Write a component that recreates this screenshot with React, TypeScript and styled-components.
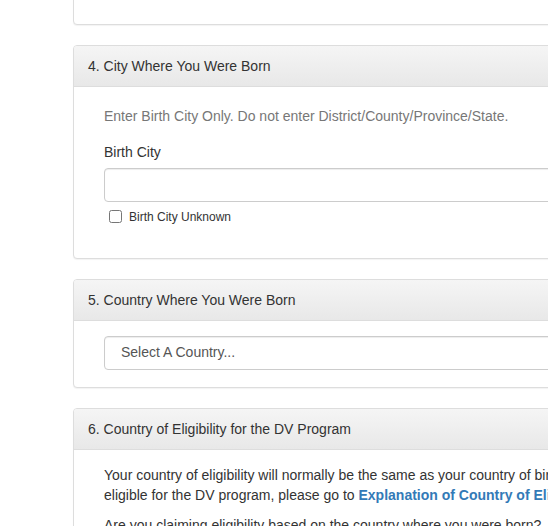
import styled, { createGlobalStyle } from 'styled-components'

const GlobalStyle = createGlobalStyle`
  html, body {
    margin: 0;
    padding: 0;
    background: #fff;
    overflow: hidden;
  }
  body {
    font-family: "Liberation Sans", Arial, Helvetica, sans-serif;
    font-size: 14px;
    line-height: 1.42857;
    color: #333;
  }
  * {
    box-sizing: border-box;
  }
`

const Page = styled.div`
  padding-left: 73px;
  width: 1300px;
  margin-top: -40px;
`

const Panel = styled.div`
  background: #fff;
  border: 1px solid #ddd;
  border-radius: 4px;
  box-shadow: 0 1px 1px rgba(0, 0, 0, 0.05);
  margin-bottom: 20px;
`

const PanelHeading = styled.div`
  padding: 10px 14px;
  border-bottom: 1px solid #ddd;
  border-radius: 3px 3px 0 0;
  background: linear-gradient(to bottom, #f5f5f5 0%, #e8e8e8 100%);
  color: #333;
  font-size: 14px;
  line-height: 20px;
`

const PanelBody = styled.div<{ $height?: number; $top?: number; $bottom?: number }>`
  padding: ${({ $top = 15, $bottom = 15 }) => `${$top}px 15px ${$bottom}px`};
  height: ${({ $height }) => ($height ? `${$height}px` : 'auto')};
`

const Section = styled.div`
  padding: 0 15px;
`

const Muted = styled.p`
  margin: 5px 0 16px;
  color: #777;
`

const Text = styled.p`
  margin: 0 0 10px;
  line-height: 20px;
  color: #333;
`

const Link = styled.a`
  color: #337ab7;
  font-weight: bold;
  text-decoration: none;
`

const FieldLabel = styled.label`
  display: block;
  margin-bottom: 5px;
  color: #333;
`

const TextInput = styled.input`
  display: block;
  width: 100%;
  height: 34px;
  padding: 6px 12px;
  font: inherit;
  color: #555;
  border: 1px solid #ccc;
  border-radius: 4px;
  box-shadow: inset 0 1px 1px rgba(0, 0, 0, 0.075);
  outline: none;
`

const CheckRow = styled.label`
  display: flex;
  align-items: center;
  gap: 7px;
  margin: 5px 0 16px 5px;
  font-size: 12px;
  line-height: 20px;
  color: #333;
`

const CheckBox = styled.input`
  margin: 0;
  width: 13px;
  height: 13px;
`

const SelectBox = styled.div`
  height: 34px;
  padding: 0 16px;
  display: flex;
  align-items: center;
  color: #555;
  border: 1px solid #ccc;
  border-radius: 4px;
  box-shadow: inset 0 1px 1px rgba(0, 0, 0, 0.075);
`

export default function App() {
  return (
    <>
      <GlobalStyle />
      <Page>
        <Panel>
          <PanelBody $height={63} />
        </Panel>

        <Panel>
          <PanelHeading>4. City Where You Were Born</PanelHeading>
          <PanelBody>
            <Section>
              <Muted>Enter Birth City Only. Do not enter District/County/Province/State.</Muted>
              <FieldLabel htmlFor="birth-city">Birth City</FieldLabel>
              <TextInput id="birth-city" type="text" />
              <CheckRow>
                <CheckBox type="checkbox" />
                Birth City Unknown
              </CheckRow>
            </Section>
          </PanelBody>
        </Panel>

        <Panel>
          <PanelHeading>5. Country Where You Were Born</PanelHeading>
          <PanelBody $bottom={17}>
            <Section>
              <SelectBox>Select A Country...</SelectBox>
            </Section>
          </PanelBody>
        </Panel>

        <Panel>
          <PanelHeading>6. Country of Eligibility for the DV Program</PanelHeading>
          <PanelBody $top={15}>
            <Section>
              <Text>
                Your country of eligibility will normally be the same as your country of birth. If you were born in a country that is not
                <br />
                eligible for the DV program, please go to <Link href="#">Explanation of Country of Eligibility</Link> for more information.
              </Text>
              <Text>Are you claiming eligibility based on the country where you were born?</Text>
            </Section>
          </PanelBody>
        </Panel>
      </Page>
    </>
  )
}
